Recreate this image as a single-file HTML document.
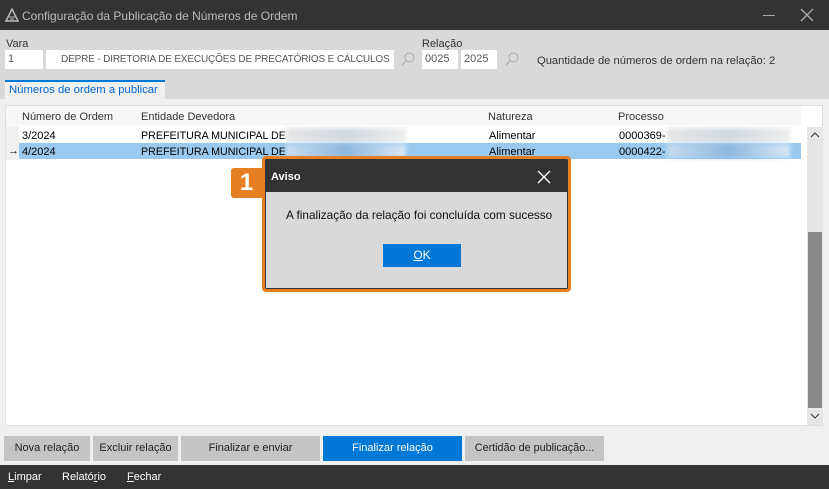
<!DOCTYPE html>
<html><head><meta charset="utf-8"><style>
*{margin:0;padding:0;box-sizing:border-box}
body{width:829px;height:489px;position:relative;overflow:hidden;background:#d9d9d9;font-family:"Liberation Sans",sans-serif;font-size:11px;color:#000}
.a{position:absolute}
.t{white-space:nowrap}
.inp{position:absolute;background:#fff;height:19px;line-height:19px;padding-left:3px;color:#555;font-size:11px;white-space:nowrap;overflow:hidden}
.btn{position:absolute;top:436px;height:25px;background:#c4c4c4;line-height:25px;text-align:center;color:#222;font-size:11px;white-space:nowrap}
.blur{position:absolute;height:14px;background:linear-gradient(90deg,#e6e6e6,#d0d8e0,#eee);filter:blur(2px)}
</style></head><body>
<div class="a" style="left:0;top:0;width:829px;height:30px;background:#333"></div>
<svg class="a" style="left:5px;top:8px" width="14" height="14"><path d="M7 1 L13 13 H1 Z" fill="none" stroke="#bbb" stroke-width="1.5"/><path d="M4 9h6M5 11h4" stroke="#bbb"/></svg>
<div class="a t" style="left:22px;top:9px;color:#bbb;font-size:12px">Configuração da Publicação de Números de Ordem</div>
<div class="a" style="left:763px;top:15px;width:12px;height:1px;background:#aaa"></div>
<svg class="a" style="left:800px;top:8px" width="14" height="14"><path d="M1 1L13 13M13 1L1 13" stroke="#aaa" stroke-width="1.3"/></svg>
<div class="a t" style="left:6px;top:38px;color:#333">Vara</div>
<div class="inp" style="left:5px;top:50px;width:38px">1</div>
<div class="inp" style="left:46px;top:50px;width:348px;padding-left:15px;font-size:10px;letter-spacing:-0.15px">DEPRE - DIRETORIA DE EXECUÇÕES DE PRECATÓRIOS E CÁLCULOS</div>
<svg class="a" style="left:401px;top:52px" width="14" height="14"><circle cx="8.5" cy="5.5" r="4.5" fill="none" stroke="#aaa"/><path d="M5.5 8.5L1 13" stroke="#aaa"/></svg>
<div class="a t" style="left:422px;top:38px;color:#333">Relação</div>
<div class="inp" style="left:422px;top:50px;width:36px">0025</div>
<div class="inp" style="left:461px;top:50px;width:36px">2025</div>
<svg class="a" style="left:505px;top:52px" width="14" height="14"><circle cx="8.5" cy="5.5" r="4.5" fill="none" stroke="#aaa"/><path d="M5.5 8.5L1 13" stroke="#aaa"/></svg>
<div class="a t" style="left:537px;top:55px;color:#333;font-size:11.2px">Quantidade de números de ordem na relação: 2</div>
<div class="a" style="left:0;top:99px;width:829px;height:366px;background:#f0f0f0"></div>
<div class="a" style="left:5px;top:80px;width:160px;height:20px;background:#f0f0f0;border-top:2px solid #0078d7"></div>
<div class="a t" style="left:9px;top:84px;color:#0066cc;font-size:11.3px">Números de ordem a publicar</div>
<div class="a" style="left:5px;top:105px;width:818px;height:321px;background:#fff;border:1px solid #e0e0e0"></div>
<div class="a" style="left:6px;top:106px;width:795px;height:19px;background:#f7f7f7"></div>
<div class="a" style="left:6px;top:126px;width:13px;height:34px;background:#f0f0f0"></div>
<div class="a t" style="left:22px;top:111px;color:#333">Número de Ordem</div>
<div class="a t" style="left:141px;top:111px;color:#333">Entidade Devedora</div>
<div class="a t" style="left:488px;top:111px;color:#333">Natureza</div>
<div class="a t" style="left:618px;top:111px;color:#333">Processo</div>
<div class="a" style="left:19px;top:143px;width:782px;height:16px;background:#99c9ef"></div>
<div class="a t" style="left:22px;top:130px">3/2024</div>
<div class="a t" style="left:141px;top:130px;font-size:10.7px">PREFEITURA MUNICIPAL DE</div>
<div class="blur" style="left:286px;top:128px;width:120px"></div>
<div class="a t" style="left:489px;top:130px">Alimentar</div>
<div class="a t" style="left:619px;top:130px">0000369-</div>
<div class="blur" style="left:667px;top:128px;width:123px"></div>
<div class="a t" style="left:8px;top:145px">→</div>
<div class="a t" style="left:22px;top:146px">4/2024</div>
<div class="a t" style="left:141px;top:146px;font-size:10.7px">PREFEITURA MUNICIPAL DE</div>
<div class="blur" style="left:286px;top:144px;width:120px;background:linear-gradient(90deg,#c8dcef,#8fb8de,#d8e8f5)"></div>
<div class="a t" style="left:489px;top:146px">Alimentar</div>
<div class="a t" style="left:619px;top:146px">0000422-</div>
<div class="blur" style="left:667px;top:144px;width:123px;background:linear-gradient(90deg,#c8dcef,#8fb8de,#d8e8f5)"></div>
<div class="a" style="left:807px;top:127px;width:16px;height:298px;background:#e6e6e6"></div>
<div class="a" style="left:808px;top:232px;width:14px;height:176px;background:#898989"></div>
<svg class="a" style="left:810px;top:131px" width="10" height="8"><path d="M1 6L5 2L9 6" fill="none" stroke="#333"/></svg>
<svg class="a" style="left:810px;top:412px" width="10" height="8"><path d="M1 2L5 6L9 2" fill="none" stroke="#333"/></svg>
<div class="btn" style="left:4px;width:86px">Nova relação</div>
<div class="btn" style="left:93px;width:85px">Excluir relação</div>
<div class="btn" style="left:181px;width:139px">Finalizar e enviar</div>
<div class="btn" style="left:323px;width:139px;background:#0078d7;color:#fff">Finalizar relação</div>
<div class="btn" style="left:465px;width:139px;font-size:10.8px">Certidão de publicação...</div>
<div class="a" style="left:0;top:465px;width:829px;height:24px;background:#333"></div>
<div class="a t" style="left:8px;top:471px;color:#fff"><u>L</u>impar</div>
<div class="a t" style="left:62px;top:471px;color:#fff">Relató<u>r</u>io</div>
<div class="a t" style="left:127px;top:471px;color:#fff"><u>F</u>echar</div>
<div class="a" style="left:262px;top:156px;width:309px;height:136px;border:3px solid #e67e22;border-radius:4px;background:#d9d9d9;box-shadow:0 0 0 1px #333 inset"></div>
<div class="a" style="left:265px;top:160px;width:303px;height:32px;background:#333"></div>
<div class="a t" style="left:271px;top:171px;color:#fff;font-weight:bold;font-size:11px">Aviso</div>
<svg class="a" style="left:537px;top:170px" width="14" height="14"><path d="M1 1L13 13M13 1L1 13" stroke="#fff" stroke-width="1.3"/></svg>
<div class="a" style="left:231px;top:168px;width:31px;height:30px;background:#e67e22;border-radius:3px 0 0 3px;color:#fff;font-weight:bold;font-size:24px;line-height:30px;text-align:center">1</div>
<div class="a t" style="left:286px;top:208px;font-size:11.8px;color:#111">A finalização da relação foi concluída com sucesso</div>
<div class="a" style="left:383px;top:244px;width:78px;height:23px;background:#0078d7;color:#fff;text-align:center;line-height:23px;font-size:12px"><u>O</u>K</div>
</body></html>
